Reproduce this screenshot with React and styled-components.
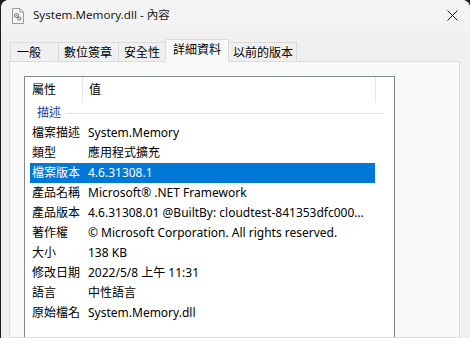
import React from 'react';
import styled, { createGlobalStyle } from 'styled-components';

const GlobalStyle = createGlobalStyle`
  html, body {
    margin: 0;
    padding: 0;
    background: #1f1f1f;
    overflow: hidden;
  }
  body {
    font-family: "Noto Sans", "Noto Sans CJK TC", sans-serif;
    font-size: 12px;
    color: #000;
  }
`;

const Window = styled.div`
  margin-left: 1px;
  width: 469px;
  height: 338px;
  background: #f0f0f0;
  border-radius: 8px 8px 0 0;
  overflow: hidden;
  display: flex;
  flex-direction: column;
`;

const TitleBar = styled.div`
  height: 31px;
  flex-shrink: 0;
  background: #f3f3f3;
  display: flex;
  align-items: center;
  padding-left: 11px;
`;

const Title = styled.span`
  margin-left: 9px;
  font-size: 11.6px;
  color: #1a1a1a;
  line-height: 16px;
  padding-bottom: 1px;
`;

const CloseButton = styled.div`
  margin-left: auto;
  margin-right: 3px;
  width: 30px;
  height: 31px;
  display: flex;
  align-items: center;
  justify-content: center;
`;

const Body = styled.div`
  flex: 1;
  display: flex;
  flex-direction: column;
  padding: 8px 10px 0 8px;
`;

const TabStrip = styled.div`
  display: flex;
  align-items: flex-start;
  height: 23px;
  padding-left: 1px;
  position: relative;
  z-index: 1;
`;

const Tab = styled.div`
  box-sizing: border-box;
  width: ${(p) => p.$width}px;
  height: ${(p) => (p.$active ? '23px' : '20px')};
  margin-top: ${(p) => (p.$active ? '0' : '3px')};
  padding-left: ${(p) => p.$pad}px;
  padding-top: ${(p) => (p.$active ? '0' : '1px')};
  padding-bottom: ${(p) => (p.$active ? '2px' : '0')};
  display: flex;
  align-items: center;
  background: ${(p) => (p.$active ? '#f9f9f9' : '#f0f0f0')};
  border: 1px solid #dcdcdc;
  border-bottom-color: ${(p) => (p.$active ? '#f9f9f9' : '#dcdcdc')};
  margin-right: -1px;
  position: relative;
  z-index: ${(p) => (p.$active ? 2 : 1)};
  font-size: 12px;
  line-height: 16px;
  color: #000;
  white-space: nowrap;
`;

const Panel = styled.div`
  flex: 1;
  background: #f9f9f9;
  border: 1px solid #dcdcdc;
  margin-top: -1px;
  padding: 14px 0 0 14px;
  display: flex;
  flex-direction: column;
`;

const ListBox = styled.div`
  width: 371px;
  flex: 1;
  box-sizing: border-box;
  background: #fff;
  border: 1px solid #828790;
  border-bottom: none;
  display: flex;
  flex-direction: column;
`;

const Header = styled.div`
  height: 26px;
  display: flex;
  align-items: stretch;
`;

const HeaderCell = styled.div`
  box-sizing: border-box;
  width: ${(p) => p.$width}px;
  padding-left: ${(p) => p.$pad}px;
  padding-bottom: 1px;
  display: flex;
  align-items: center;
  border-right: 1px solid #e5e5e5;
  line-height: 16px;
  color: #000;
`;

const GroupRow = styled.div`
  height: 20px;
  display: flex;
  align-items: center;
  padding-left: 12px;
  margin-right: 11px;
`;

const GroupLabel = styled.span`
  color: #21409a;
  line-height: 16px;
  margin-right: 5px;
`;

const GroupLine = styled.div`
  flex: 1;
  height: 1px;
  background: #dde2e8;
`;

const Row = styled.div`
  height: 20px;
  margin-left: 5px;
  width: 345px;
  display: flex;
  align-items: center;
  background: ${(p) => (p.$selected ? '#0078d7' : 'transparent')};
  color: ${(p) => (p.$selected ? '#fff' : '#000')};
  line-height: 20px;
`;

const LabelCell = styled.div`
  width: 53px;
  flex-shrink: 0;
  padding-left: 2px;
  box-sizing: border-box;
  white-space: nowrap;
`;

const ValueCell = styled.div`
  flex: 1;
  min-width: 0;
  padding-left: 5px;
  padding-right: 10px;
  white-space: nowrap;
  overflow: hidden;
  text-overflow: ellipsis;
`;

const FileIcon = () => (
  <svg width="12" height="16" viewBox="0 0 12 16">
    <path d="M0.5 0.5h7.5l3.5 3.5v11.5h-11z" fill="#fafafa" stroke="#9a9a9a" />
    <path d="M8 0.5v3.5h3.5" fill="#e6e6e6" stroke="#9a9a9a" />
    <circle cx="4.5" cy="7.5" r="2" fill="none" stroke="#7d7d7d" strokeWidth="1.2" />
    <circle cx="7.3" cy="10.6" r="1.6" fill="none" stroke="#7d7d7d" strokeWidth="1.1" />
    <circle cx="4.5" cy="7.5" r="0.6" fill="#7d7d7d" />
  </svg>
);

const CloseIcon = () => (
  <svg width="11" height="11" viewBox="0 0 11 11">
    <path d="M0.5 0.5l10 10M10.5 0.5l-10 10" stroke="#1a1a1a" strokeWidth="1" />
  </svg>
);

const tabs = [
  { label: '一般', width: 49, pad: 6 },
  { label: '數位簽章', width: 61, pad: 5 },
  { label: '安全性', width: 48, pad: 5 },
  { label: '詳細資料', width: 64, pad: 7, active: true },
  { label: '以前的版本', width: 69, pad: 4 },
];

const rows = [
  ['檔案描述', 'System.Memory'],
  ['類型', '應用程式擴充'],
  ['檔案版本', '4.6.31308.1'],
  ['產品名稱', 'Microsoft® .NET Framework'],
  ['產品版本', '4.6.31308.01 @BuiltBy: cloudtest-841353dfc000000 @Branch: release/2.1-MSRC'],
  ['著作權', '© Microsoft Corporation. All rights reserved.'],
  ['大小', '138 KB'],
  ['修改日期', '2022/5/8 上午 11:31'],
  ['語言', '中性語言'],
  ['原始檔名', 'System.Memory.dll'],
];

const App = () => {
  return (
    <>
      <GlobalStyle />
      <Window>
        <TitleBar>
          <FileIcon />
          <Title>System.Memory.dll - 內容</Title>
          <CloseButton>
            <CloseIcon />
          </CloseButton>
        </TitleBar>
        <Body>
          <TabStrip>
            {tabs.map((t) => (
              <Tab key={t.label} $width={t.width} $pad={t.pad} $active={t.active}>
                {t.label}
              </Tab>
            ))}
          </TabStrip>
          <Panel>
            <ListBox>
              <Header>
                <HeaderCell $width={58} $pad={7}>屬性</HeaderCell>
                <HeaderCell $width={293} $pad={6}>值</HeaderCell>
              </Header>
              <GroupRow>
                <GroupLabel>描述</GroupLabel>
                <GroupLine />
              </GroupRow>
              {rows.map(([label, value]) => (
                <Row key={label} $selected={label === '檔案版本'}>
                  <LabelCell>{label}</LabelCell>
                  <ValueCell>{value}</ValueCell>
                </Row>
              ))}
            </ListBox>
          </Panel>
        </Body>
      </Window>
    </>
  );
};

export default App;
